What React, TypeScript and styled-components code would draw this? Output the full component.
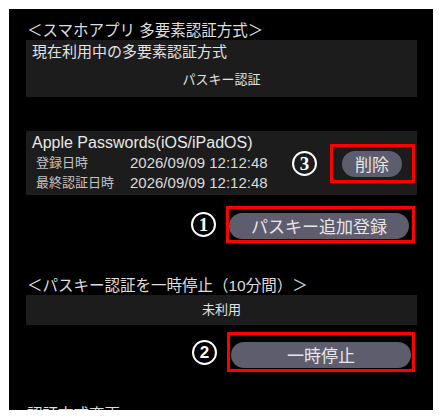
import React from 'react'
import styled, { createGlobalStyle } from 'styled-components'

const GlobalStyle = createGlobalStyle`
  html, body {
    margin: 0;
    padding: 0;
    background: #ffffff;
  }
  body {
    font-family: 'Liberation Sans', 'Noto Sans CJK JP', sans-serif;
  }
`

const Page = styled.div`
  padding: 9px;
`

const Panel = styled.div`
  width: 424px;
  height: 401px;
  box-sizing: border-box;
  padding: 12px 16px 0 17px;
  background: #000000;
  color: #e2e2e2;
  overflow: hidden;
`

const SectionTitle = styled.div<{ $gap?: number }>`
  margin-top: ${({ $gap }) => $gap || 0}px;
  padding-left: 1px;
  font-size: 15.5px;
  line-height: 19px;
  color: #dedede;
  white-space: nowrap;
`

const InfoBox = styled.div`
  background: #1c1c1c;
  padding: 0 6px 7px;
`

const BoxHeading = styled.div`
  font-size: 15px;
  line-height: 24px;
`

const BoxValue = styled.div<{ $tall?: boolean }>`
  margin-top: ${({ $tall }) => ($tall ? 0 : 6)}px;
  text-align: center;
  font-size: 13px;
  line-height: ${({ $tall }) => ($tall ? 30 : 20)}px;
`

const PlainBox = styled.div`
  background: #1c1c1c;
`

const DeviceBox = styled.div`
  margin-top: 34px;
  background: #1c1c1c;
  padding: 2px 2px 2px 6px;
  display: flex;
  align-items: center;
  justify-content: space-between;
`

const DeviceInfo = styled.div`
  display: flex;
  flex-direction: column;
`

const DeviceName = styled.div`
  font-size: 16px;
  line-height: 20px;
  color: #e8e8e8;
`

const DateGrid = styled.div`
  display: grid;
  grid-template-columns: 94px auto;
  padding-left: 4px;
`

const DateLabel = styled.span`
  font-size: 13px;
  line-height: 20px;
  color: #c4c4c4;
`

const DateValue = styled.span`
  font-size: 15px;
  line-height: 20px;
  color: #dcdcdc;
`

const ActionRow = styled.div<{ $gap: number }>`
  margin-top: ${({ $gap }) => $gap}px;
  display: flex;
  align-items: center;
  justify-content: flex-end;
  gap: 10px;
  padding-right: 2px;
`

const InlineAction = styled.div`
  display: flex;
  align-items: center;
  gap: 13px;
`

const Marker = styled.span<{ $serif?: boolean }>`
  width: 21px;
  height: 21px;
  border: 2px solid #ffffff;
  border-radius: 50%;
  display: flex;
  align-items: center;
  justify-content: center;
  color: #ffffff;
  font-family: ${({ $serif }) => ($serif ? "'Liberation Serif', serif" : "'Liberation Sans', sans-serif")};
  font-weight: 700;
  font-size: ${({ $serif }) => ($serif ? 19 : 17)}px;
  line-height: 1;
`

const Highlight = styled.div<{ $pad: string }>`
  border: 3px solid #ff0000;
  padding: ${({ $pad }) => $pad};
  display: flex;
`

const PillButton = styled.button<{ $width: number }>`
  width: ${({ $width }) => $width}px;
  height: 26px;
  border: none;
  border-radius: 13px;
  background: #5e5d6e;
  color: #e6e6e6;
  font-family: 'Noto Sans CJK JP', sans-serif;
  font-size: 17px;
  line-height: 26px;
  padding: 0;
  text-align: center;
  cursor: pointer;
`

export default function App() {
  return (
    <>
      <GlobalStyle />
      <Page>
        <Panel>
          <SectionTitle>＜スマホアプリ 多要素認証方式＞</SectionTitle>
          <InfoBox>
            <BoxHeading>現在利用中の多要素認証方式</BoxHeading>
            <BoxValue>パスキー認証</BoxValue>
          </InfoBox>

          <DeviceBox>
            <DeviceInfo>
              <DeviceName>Apple Passwords(iOS/iPadOS)</DeviceName>
              <DateGrid>
                <DateLabel>登録日時</DateLabel>
                <DateValue>2026/09/09 12:12:48</DateValue>
                <DateLabel>最終認証日時</DateLabel>
                <DateValue>2026/09/09 12:12:48</DateValue>
              </DateGrid>
            </DeviceInfo>
            <InlineAction>
              <Marker $serif>3</Marker>
              <Highlight $pad="4px 10px 3px 9px">
                <PillButton $width={60}>削除</PillButton>
              </Highlight>
            </InlineAction>
          </DeviceBox>

          <ActionRow $gap={11}>
            <Marker $serif>1</Marker>
            <Highlight $pad="4px 3px 1px 0">
              <PillButton $width={180}>パスキー追加登録</PillButton>
            </Highlight>
          </ActionRow>

          <SectionTitle $gap={33}>＜パスキー認証を一時停止（10分間）＞</SectionTitle>
          <PlainBox>
            <BoxValue $tall>未利用</BoxValue>
          </PlainBox>

          <ActionRow $gap={7}>
            <Marker>2</Marker>
            <Highlight $pad="7px 1px 1px 1px">
              <PillButton $width={180}>一時停止</PillButton>
            </Highlight>
          </ActionRow>

          <SectionTitle $gap={33}>認証方式変更</SectionTitle>
        </Panel>
      </Page>
    </>
  )
}
